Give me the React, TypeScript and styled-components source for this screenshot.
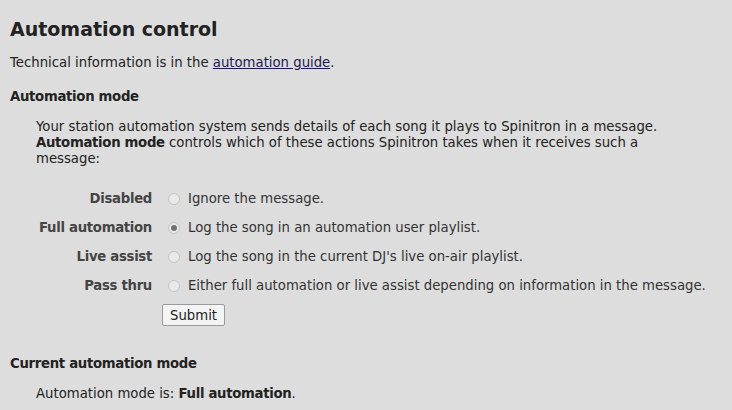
import React from "react";
import styled, { createGlobalStyle } from "styled-components";

const Global = createGlobalStyle`
  html, body { margin: 0; padding: 0; background: #dddddd; }
  body {
    font-family: "DejaVu Sans", Verdana, sans-serif;
    font-size: 13.25px;
    color: #222;
  }
`;

const Page = styled.div`
  padding: 15px 10px 0 10px;
`;

const Title = styled.h1`
  margin: 0 0 12px 0;
  font-size: 19px;
  font-weight: bold;
  line-height: 28px;
  color: #222;
`;

const Para = styled.p`
  margin: 0;
  line-height: 16px;
`;

const Link = styled.a`
  color: #1b1b4d;
  text-decoration: underline;
`;

const Heading = styled.h3<{ $top: number }>`
  margin: ${(p) => p.$top}px 0 0 0;
  font-size: 13.25px;
  font-weight: bold;
  letter-spacing: -0.3px;
  line-height: 16px;
`;

const Strong = styled.b`
  letter-spacing: -0.3px;
`;

const Indented = styled.div`
  padding: 0 26px;
  margin-top: 14px;
  line-height: 16px;
`;

const Form = styled.form`
  margin-top: 24px;
  display: grid;
  grid-template-columns: 142px auto;
  column-gap: 10px;
  row-gap: 13px;
  align-items: center;
`;

const Label = styled.label`
  text-align: right;
  font-weight: bold;
  letter-spacing: -0.3px;
  color: #444;
  line-height: 16px;
`;

const Choice = styled.div`
  display: flex;
  align-items: center;
  gap: 8px;
  line-height: 16px;
  color: #333;
`;

const Radio = styled.input.attrs({ type: "radio" })`
  appearance: none;
  margin: 0 0 0 6px;
  width: 12px;
  height: 12px;
  border-radius: 50%;
  border: 1px solid #c4c4c4;
  background: #e9e9e9;
  box-sizing: border-box;
  display: grid;
  place-items: center;
  &:checked::after {
    content: "";
    width: 6px;
    height: 6px;
    border-radius: 50%;
    background: #707070;
  }
`;

const Submit = styled.button`
  grid-column: 2;
  justify-self: start;
  margin-top: -3px;
  font-family: "DejaVu Sans", Verdana, sans-serif;
  font-size: 13.25px;
  color: #222;
  background: #f4f4f4;
  border: 1px solid #9a9a9a;
  border-radius: 2px;
  padding: 1px 7px;
  height: 22px;
`;

const modes = [
  { label: "Disabled", text: "Ignore the message.", checked: false },
  { label: "Full automation", text: "Log the song in an automation user playlist.", checked: true },
  { label: "Live assist", text: "Log the song in the current DJ's live on-air playlist.", checked: false },
  {
    label: "Pass thru",
    text: "Either full automation or live assist depending on information in the message.",
    checked: false,
  },
];

export default function App() {
  return (
    <>
      <Global />
      <Page>
        <Title>Automation control</Title>
        <Para>
          Technical information is in the <Link href="#">automation guide</Link>.
        </Para>
        <Heading $top={18}>Automation mode</Heading>
        <Indented>
          Your station automation system sends details of each song it plays to Spinitron in a message.{" "}
          <Strong>Automation mode</Strong> controls which of these actions Spinitron takes when it receives such a
          message:
        </Indented>
        <Form onSubmit={(e) => e.preventDefault()}>
          {modes.map((m, i) => (
            <React.Fragment key={m.label}>
              <Label htmlFor={`mode${i}`}>{m.label}</Label>
              <Choice>
                <Radio id={`mode${i}`} name="mode" defaultChecked={m.checked} />
                <span>{m.text}</span>
              </Choice>
            </React.Fragment>
          ))}
          <Submit type="submit">Submit</Submit>
        </Form>
        <Heading $top={30}>Current automation mode</Heading>
        <Indented>
          Automation mode is: <Strong>Full automation</Strong>.
        </Indented>
      </Page>
    </>
  );
}
